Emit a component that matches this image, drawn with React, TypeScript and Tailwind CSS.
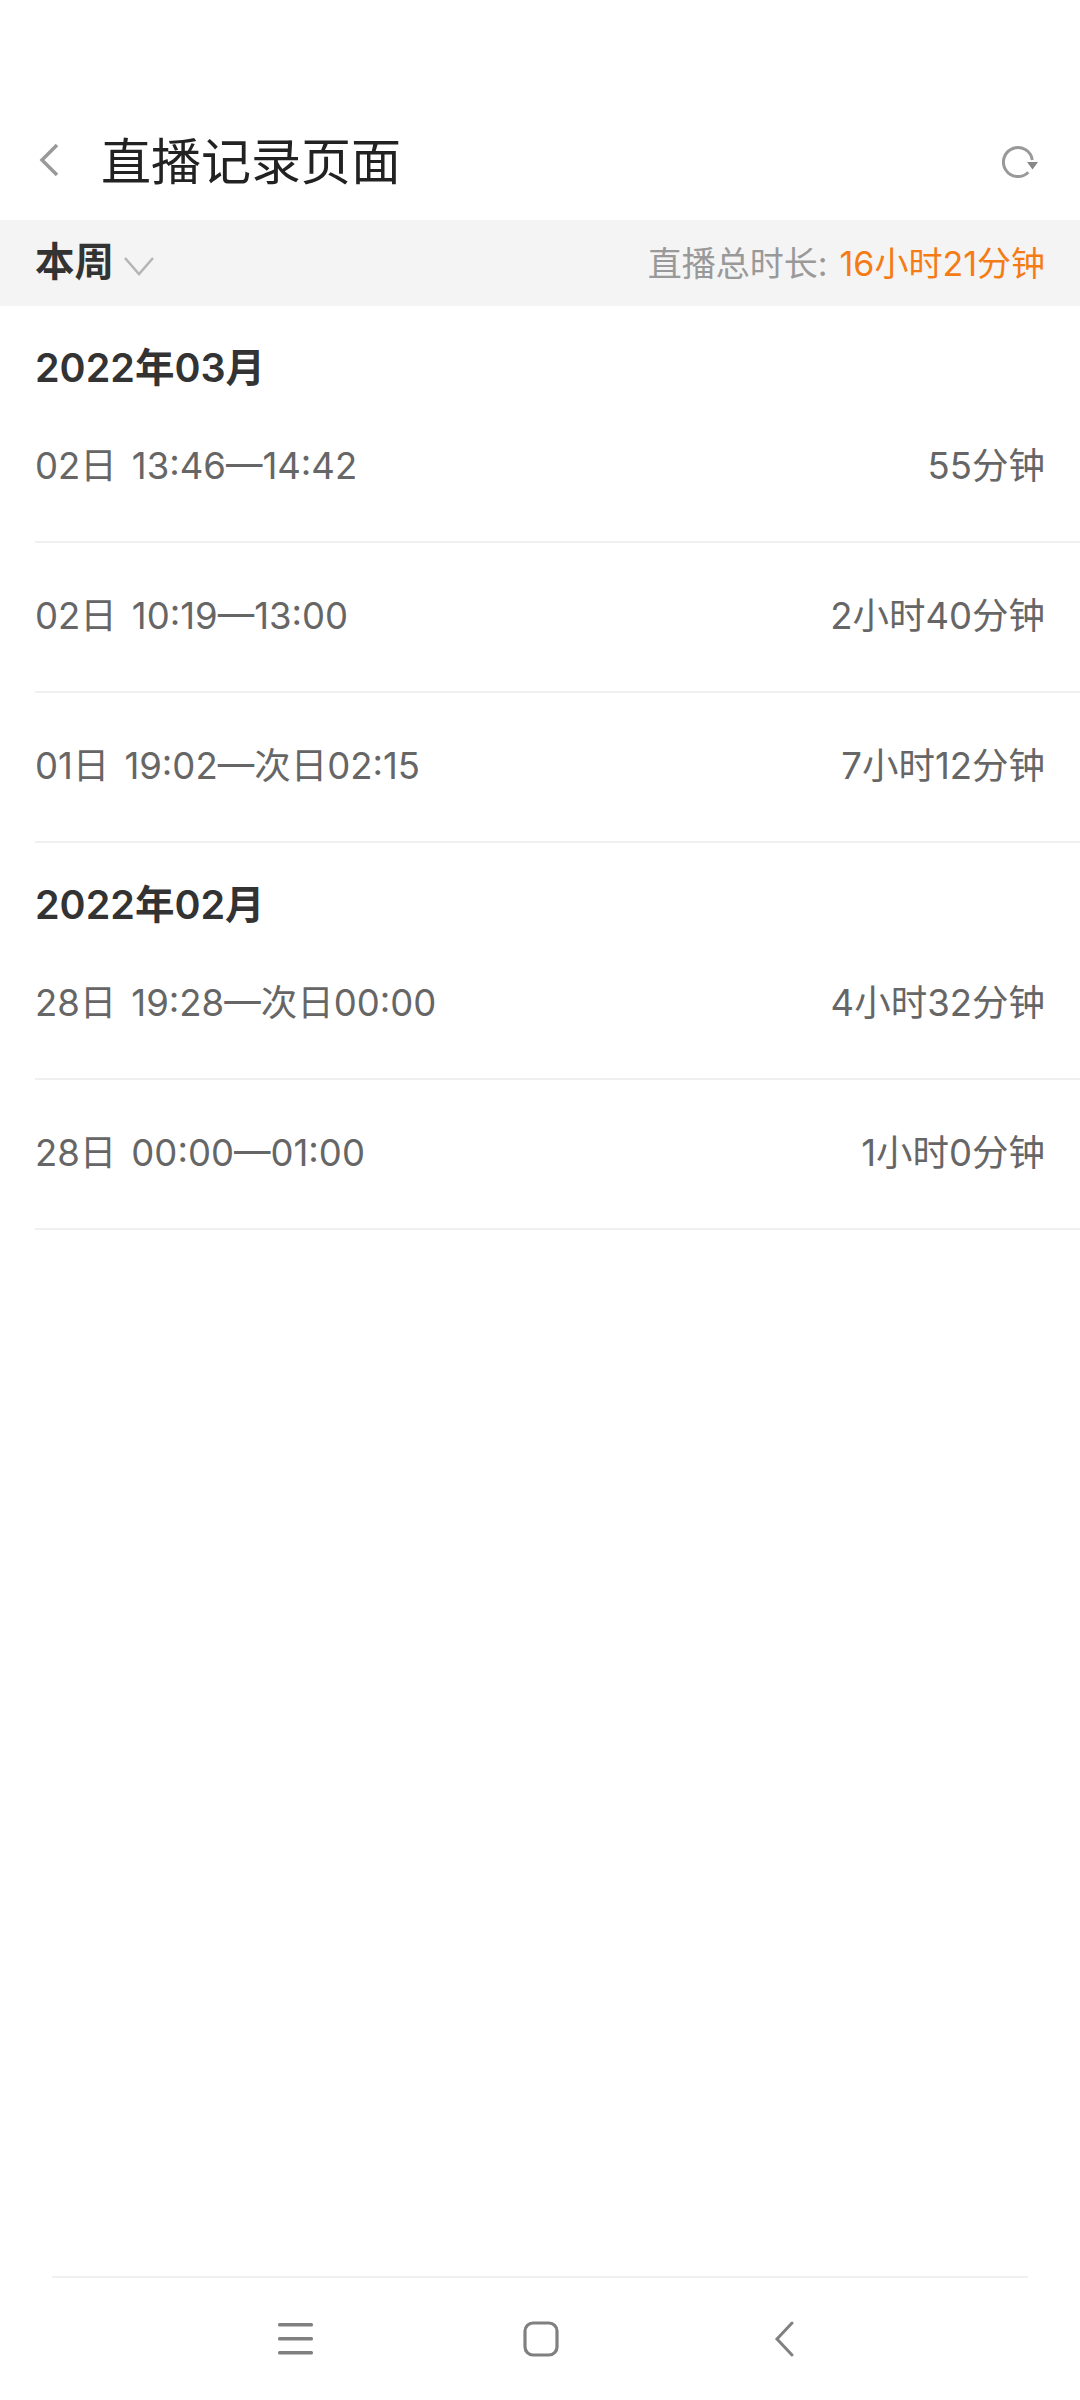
const font = {
  fontFamily: '"Inter", "Noto Sans CJK SC", sans-serif',
};

const sections = [
  {
    month: "2022年03月",
    rows: [
      { day: "02日", time: "13:46—14:42", total: "55分钟" },
      { day: "02日", time: "10:19—13:00", total: "2小时40分钟" },
      { day: "01日", time: "19:02—次日02:15", total: "7小时12分钟" },
    ],
  },
  {
    month: "2022年02月",
    rows: [
      { day: "28日", time: "19:28—次日00:00", total: "4小时32分钟" },
      { day: "28日", time: "00:00—01:00", total: "1小时0分钟" },
    ],
  },
];

function Header() {
  return (
    <header className="flex h-[220px] items-start pl-[39px] pr-[42px] pt-[134px]">
      <svg width="20" height="34" viewBox="0 0 20 34" fill="none" stroke="#999" strokeWidth="3.5" className="mt-[9px]">
        <path d="M18 2 3 17l15 15" />
      </svg>
      <h1 className="ml-[42px] flex-1 text-[50px] leading-[56px] text-[#222]">直播记录页面</h1>
      <svg width="36" height="36" viewBox="0 0 36 36" fill="none" className="mt-[9px]">
        <path d="M30.3 17A14.5 14.5 0 1 0 26.3 29.2" stroke="#999" strokeWidth="3" />
        <path d="M25 19h11l-5.5 7.5z" fill="#888" />
      </svg>
    </header>
  );
}

function FilterBar() {
  return (
    <div className="flex h-[86px] items-center justify-between bg-[#f4f4f4] pl-[35px] pr-[35px]">
      <div className="flex items-center">
        <span className="text-[39.5px] font-semibold text-[#333]">本周</span>
        <svg width="32" height="21" viewBox="0 0 32 21" fill="none" stroke="#b5b5b5" strokeWidth="2.5" className="ml-[9px] mt-[6px]">
          <path d="M2 2l14 16L30 2" />
        </svg>
      </div>
      <p className="text-[34px] text-[#999]">
        直播总时长:<span className="ml-[12px] text-[#f57c14]">16小时21分钟</span>
      </p>
    </div>
  );
}

function Row({ day, time, total }: { day: string; time: string; total: string }) {
  return (
    <div className="flex h-[150px] items-start justify-between border-b-2 border-[#f0f0f0] pr-[35px] pt-[49px] text-[36.5px] leading-[48px] text-[#666]">
      <p>
        {day}
        <span className="ml-[15px]">{time}</span>
      </p>
      <span>{total}</span>
    </div>
  );
}

export default function App() {
  return (
    <div className="flex min-h-[2400px] flex-col bg-white" style={font}>
      <Header />
      <FilterBar />
      <main className="pl-[35px]">
        {sections.map((section) => (
          <section key={section.month}>
            <h2 className="flex h-[87px] items-end text-[39.5px] font-semibold leading-[50px] text-[#333]">
              {section.month}
            </h2>
            {section.rows.map((row) => (
              <Row key={row.day + row.time} day={row.day} time={row.time} total={row.total} />
            ))}
          </section>
        ))}
      </main>
      <nav className="mx-[52px] mt-auto flex h-[124px] items-center border-t-2 border-[#f0f0f0] pb-[1px] pl-[226px]">
        <svg width="36" height="34" viewBox="0 0 36 34" fill="#808080">
          <rect x="0" y="1" width="35" height="3.5" rx="1.5" />
          <rect x="0" y="15" width="35" height="3.5" rx="1.5" />
          <rect x="0" y="29" width="35" height="3.5" rx="1.5" />
        </svg>
        <svg width="36" height="36" viewBox="0 0 36 36" fill="none" stroke="#808080" strokeWidth="3.2" className="ml-[209px]">
          <rect x="2" y="2" width="32" height="32" rx="8" />
        </svg>
        <svg width="20" height="36" viewBox="0 0 20 36" fill="none" stroke="#808080" strokeWidth="3" strokeLinecap="round" className="ml-[215px]">
          <path d="M18 2 3 18l15 16" />
        </svg>
      </nav>
    </div>
  );
}
